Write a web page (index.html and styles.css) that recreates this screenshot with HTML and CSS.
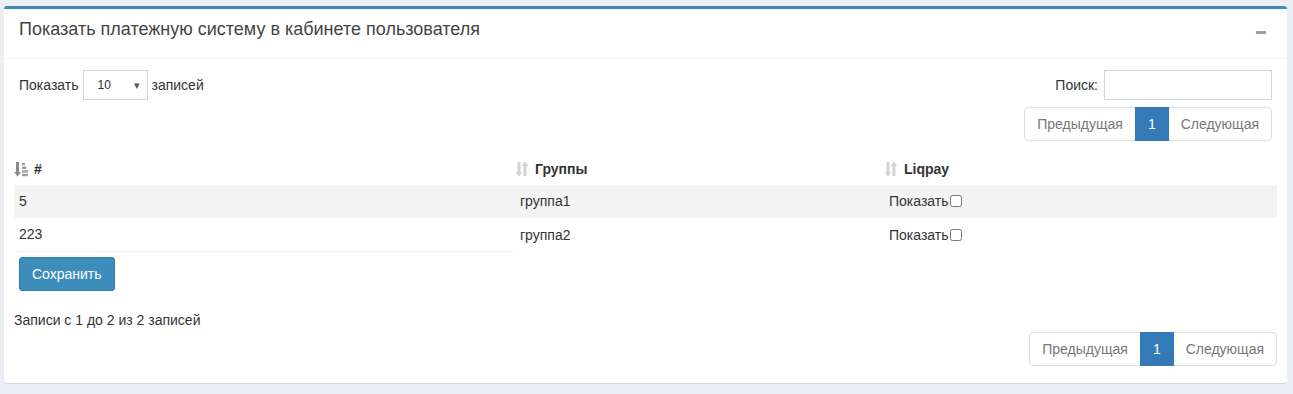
FILE: index.html
```html
<!DOCTYPE html>
<html lang="ru">
<head>
    <meta charset="UTF-8">
    <meta name="viewport" content="width=device-width, initial-scale=1.0">
    <title>Платежные системы</title>
    <link rel="stylesheet" href="styles.css">
</head>
<body>
    <div class="box">
        <div class="box-header">
            <h3 class="box-title">Показать платежную систему в кабинете пользователя</h3>
            <span class="box-tool" title="Свернуть"></span>
        </div>

        <div class="box-body">
            <div class="table-controls">
                <div class="length-control">
                    Показать
                    <div class="select-box"><span>10</span><span class="select-arrow">&#9662;</span></div>
                    записей
                </div>
                <div class="right-controls">
                    <label class="search-control">Поиск: <input type="search" class="search-input"></label>
                    <ul class="pagination">
                        <li class="disabled"><a href="#">Предыдущая</a></li>
                        <li class="active"><a href="#">1</a></li>
                        <li class="disabled"><a href="#">Следующая</a></li>
                    </ul>
                </div>
            </div>

            <form id="paymentForm">
                <table class="data-table">
                    <colgroup>
                        <col class="col-id">
                        <col class="col-group">
                        <col class="col-liqpay">
                    </colgroup>
                    <thead>
                        <tr>
                            <th>
                                <span class="th-inner">
                                    <svg class="sort-icon" width="14" height="16" viewBox="0 0 14 16">
                                        <path d="M2 1h3v10h2l-3.5 4.5L0 11h2z" fill="#8c8c8c"/>
                                        <rect x="8" y="2" width="3" height="2.4" fill="#a0a0a0"/>
                                        <rect x="8" y="5.6" width="4.5" height="2.4" fill="#a0a0a0"/>
                                        <rect x="8" y="9.2" width="6" height="2.4" fill="#a0a0a0"/>
                                        <rect x="8" y="12.8" width="6" height="2.4" fill="#a0a0a0"/>
                                    </svg>
                                    #
                                </span>
                            </th>
                            <th>
                                <span class="th-inner">
                                    <svg class="sort-icon" width="14" height="16" viewBox="0 0 14 16">
                                        <path d="M2.5 1h3v10h2L4 15.5 0.5 11h2z" fill="#d2d2d2"/>
                                        <path d="M8.5 15h3V5h2L10 0.5 6.5 5h2z" fill="#d2d2d2"/>
                                    </svg>
                                    Группы
                                </span>
                            </th>
                            <th>
                                <span class="th-inner">
                                    <svg class="sort-icon" width="14" height="16" viewBox="0 0 14 16">
                                        <path d="M2.5 1h3v10h2L4 15.5 0.5 11h2z" fill="#d2d2d2"/>
                                        <path d="M8.5 15h3V5h2L10 0.5 6.5 5h2z" fill="#d2d2d2"/>
                                    </svg>
                                    Liqpay
                                </span>
                            </th>
                        </tr>
                    </thead>
                    <tbody>
                        <tr class="odd">
                            <td>5</td>
                            <td>группа1</td>
                            <td class="check-cell">Показать<input type="checkbox" name="show_5"></td>
                        </tr>
                        <tr class="even">
                            <td class="last-id">223</td>
                            <td class="shifted">группа2</td>
                            <td class="check-cell shifted">Показать<input type="checkbox" name="show_223"></td>
                        </tr>
                    </tbody>
                </table>
                <button type="submit" class="btn-save">Сохранить</button>
            </form>

            <div class="table-info">Записи с 1 до 2 из 2 записей</div>

            <div class="bottom-paging">
                <ul class="pagination">
                    <li class="disabled"><a href="#">Предыдущая</a></li>
                    <li class="active"><a href="#">1</a></li>
                    <li class="disabled"><a href="#">Следующая</a></li>
                </ul>
            </div>
        </div>
    </div>
</body>
</html>
```

FILE: styles.css
```css
body {
    background-color: #ecf0f5;
    color: #333;
    font-family: 'Liberation Sans', Arial, sans-serif;
    font-size: 14px;
    line-height: 20px;
    margin: 0;
    padding: 6px 6px 11px 4px;
}

.box {
    background-color: #fff;
    border-top: 3px solid #3c8dbc;
    border-radius: 3px;
    box-shadow: 0 1px 1px rgba(0,0,0,0.1);
}

.box-header {
    display: flex;
    justify-content: space-between;
    align-items: flex-start;
    padding: 10px 21px 19px 15px;
    border-bottom: 1px solid #f4f4f4;
}

.box-title {
    margin: 0;
    font-size: 18px;
    font-weight: normal;
    line-height: 20px;
    color: #444;
}

.box-tool {
    display: block;
    width: 10px;
    height: 3px;
    margin-top: 12px;
    background-color: #97a0b3;
}

.box-body {
    padding: 11px 10px 17px 10px;
}

.table-controls {
    display: flex;
    justify-content: space-between;
    align-items: flex-start;
    padding: 0 5px;
}

.length-control {
    display: flex;
    align-items: center;
    gap: 4px;
}

.select-box {
    display: flex;
    justify-content: space-between;
    align-items: center;
    width: 65px;
    height: 30px;
    box-sizing: border-box;
    border: 1px solid #d2d6de;
    padding: 0 7px 0 14px;
    font-size: 12px;
}

.select-arrow {
    font-size: 11px;
    color: #555;
}

.right-controls {
    display: flex;
    flex-direction: column;
    align-items: flex-end;
    gap: 7px;
}

.search-control {
    display: flex;
    align-items: center;
    gap: 6px;
}

.search-input {
    width: 168px;
    height: 30px;
    box-sizing: border-box;
    border: 1px solid #d2d6de;
    border-radius: 0;
    padding: 4px 8px;
    font-family: inherit;
    font-size: 14px;
    outline: none;
}

.pagination {
    display: flex;
    list-style: none;
    margin: 0;
    padding: 0;
}

.pagination li a {
    display: block;
    padding: 6px 12px;
    line-height: 20px;
    border: 1px solid #ddd;
    margin-left: -1px;
    color: #777;
    text-decoration: none;
    background-color: #fff;
}

.pagination li:first-child a {
    margin-left: 0;
    border-radius: 4px 0 0 4px;
}

.pagination li:last-child a {
    border-radius: 0 4px 4px 0;
}

.pagination li.active a {
    background-color: #337ab7;
    border-color: #337ab7;
    color: #fff;
    position: relative;
    z-index: 1;
}

.data-table {
    width: 100%;
    margin-top: 14px;
    border-collapse: collapse;
    table-layout: fixed;
}

.col-id {
    width: 501px;
}

.col-group {
    width: 369px;
}

.data-table th {
    text-align: left;
    padding: 4px 5px 6px 0;
    font-weight: bold;
}

.th-inner {
    display: flex;
    align-items: center;
    gap: 6px;
}

.sort-icon {
    flex-shrink: 0;
}

.data-table td {
    padding: 6px 5px 7px;
    vertical-align: top;
}

.data-table tr.odd td {
    background-color: #f4f4f4;
}

.data-table td.last-id {
    border-bottom: 1px solid #f4f4f4;
}

.data-table td.shifted {
    padding-top: 7px;
    padding-bottom: 6px;
}

.check-cell input[type="checkbox"] {
    width: 12px;
    height: 12px;
    margin: 4px 0 0 1px;
    vertical-align: top;
}

.btn-save {
    display: block;
    margin: 5px 0 0 5px;
    background-color: #3c8dbc;
    border: 1px solid #367fa9;
    border-radius: 3px;
    color: #fff;
    font-family: inherit;
    font-size: 14px;
    line-height: 20px;
    padding: 6px 12px;
    cursor: pointer;
}

.table-info {
    margin-top: 19px;
}

.bottom-paging {
    display: flex;
    justify-content: flex-end;
    margin-top: 2px;
}
```
